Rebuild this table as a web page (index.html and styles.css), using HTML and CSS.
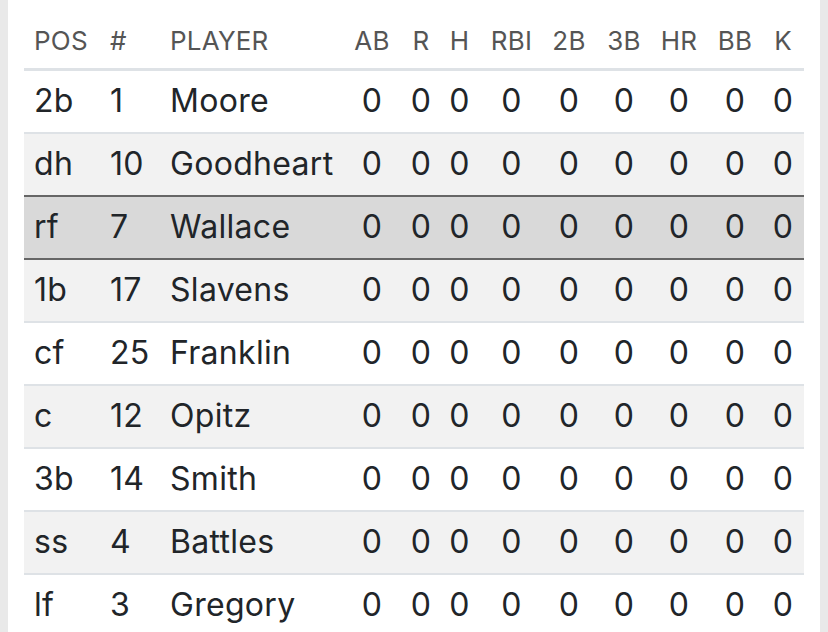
FILE: index.html
```html
<!DOCTYPE html>
<html lang="en">
<head>
    <meta charset="UTF-8">
    <meta name="viewport" content="width=device-width, initial-scale=1.0">
    <title>Box Score</title>
    <link rel="stylesheet" href="styles.css">
</head>
<body>
    <div class="panel">
        <table class="box">
            <colgroup>
                <col class="c-pos">
                <col class="c-num">
                <col class="c-name">
                <col class="c-ab">
                <col class="c-r">
                <col class="c-h">
                <col class="c-rbi">
                <col class="c-2b">
                <col class="c-3b">
                <col class="c-hr">
                <col class="c-bb">
                <col class="c-k">
            </colgroup>
            <thead>
                <tr>
                    <th class="left">POS</th>
                    <th class="left">#</th>
                    <th class="left">PLAYER</th>
                    <th>AB</th>
                    <th>R</th>
                    <th>H</th>
                    <th>RBI</th>
                    <th>2B</th>
                    <th>3B</th>
                    <th>HR</th>
                    <th>BB</th>
                    <th class="last">K</th>
                </tr>
            </thead>
            <tbody>
                <tr>
                    <td class="left">2b</td><td class="left">1</td><td class="left">Moore</td>
                    <td>0</td><td>0</td><td>0</td><td>0</td><td>0</td><td>0</td><td>0</td><td>0</td><td class="last">0</td>
                </tr>
                <tr>
                    <td class="left">dh</td><td class="left">10</td><td class="left">Goodheart</td>
                    <td>0</td><td>0</td><td>0</td><td>0</td><td>0</td><td>0</td><td>0</td><td>0</td><td class="last">0</td>
                </tr>
                <tr class="active">
                    <td class="left">rf</td><td class="left">7</td><td class="left">Wallace</td>
                    <td>0</td><td>0</td><td>0</td><td>0</td><td>0</td><td>0</td><td>0</td><td>0</td><td class="last">0</td>
                </tr>
                <tr>
                    <td class="left">1b</td><td class="left">17</td><td class="left">Slavens</td>
                    <td>0</td><td>0</td><td>0</td><td>0</td><td>0</td><td>0</td><td>0</td><td>0</td><td class="last">0</td>
                </tr>
                <tr>
                    <td class="left">cf</td><td class="left">25</td><td class="left">Franklin</td>
                    <td>0</td><td>0</td><td>0</td><td>0</td><td>0</td><td>0</td><td>0</td><td>0</td><td class="last">0</td>
                </tr>
                <tr>
                    <td class="left">c</td><td class="left">12</td><td class="left">Opitz</td>
                    <td>0</td><td>0</td><td>0</td><td>0</td><td>0</td><td>0</td><td>0</td><td>0</td><td class="last">0</td>
                </tr>
                <tr>
                    <td class="left">3b</td><td class="left">14</td><td class="left">Smith</td>
                    <td>0</td><td>0</td><td>0</td><td>0</td><td>0</td><td>0</td><td>0</td><td>0</td><td class="last">0</td>
                </tr>
                <tr>
                    <td class="left">ss</td><td class="left">4</td><td class="left">Battles</td>
                    <td>0</td><td>0</td><td>0</td><td>0</td><td>0</td><td>0</td><td>0</td><td>0</td><td class="last">0</td>
                </tr>
                <tr>
                    <td class="left">lf</td><td class="left">3</td><td class="left">Gregory</td>
                    <td>0</td><td>0</td><td>0</td><td>0</td><td>0</td><td>0</td><td>0</td><td>0</td><td class="last">0</td>
                </tr>
            </tbody>
        </table>
    </div>
</body>
</html>
```

FILE: styles.css
```css
html, body {
    margin: 0;
    padding: 0;
}
body {
    font-family: Inter, "Noto Sans", sans-serif;
    background-color: #e9e9e9;
    color: #212529;
    overflow: hidden;
}
.panel {
    background-color: #fff;
    margin: 0 8px;
    padding: 0 16px;
    height: 632px;
}
.box {
    width: 780px;
    border-collapse: collapse;
    table-layout: fixed;
}
.c-pos { width: 76px; }
.c-num { width: 60px; }
.c-name { width: 185px; }
.c-ab { width: 54px; }
.c-r { width: 44px; }
.c-h { width: 33px; }
.c-rbi { width: 71px; }
.c-2b { width: 44px; }
.c-3b { width: 66px; }
.c-hr { width: 44px; }
.c-bb { width: 68px; }
.c-k { width: 35px; }
th, td {
    text-align: center;
    padding-left: 0;
    padding-right: 0;
    white-space: nowrap;
}
th {
    font-size: 26px;
    font-weight: 400;
    line-height: 37px;
    letter-spacing: 0.2px;
    color: #555;
    padding-top: 22px;
    padding-bottom: 9px;
    border-bottom: 3px solid #dee2e6;
}
td {
    font-size: 32px;
    line-height: 39px;
    letter-spacing: 0.3px;
    padding-top: 10px;
    padding-bottom: 12px;
    border-top: 2px solid #dee2e6;
}
th.left, td.left {
    text-align: left;
    padding-left: 10px;
}
th.last, td.last {
    padding-right: 7px;
}
tbody tr:nth-child(even) {
    background-color: #f2f2f2;
}
tbody tr.active {
    background-color: #d9d9d9;
}
tbody tr.active td {
    border-top: 2px solid #666;
    border-bottom: 2px solid #666;
}
```
